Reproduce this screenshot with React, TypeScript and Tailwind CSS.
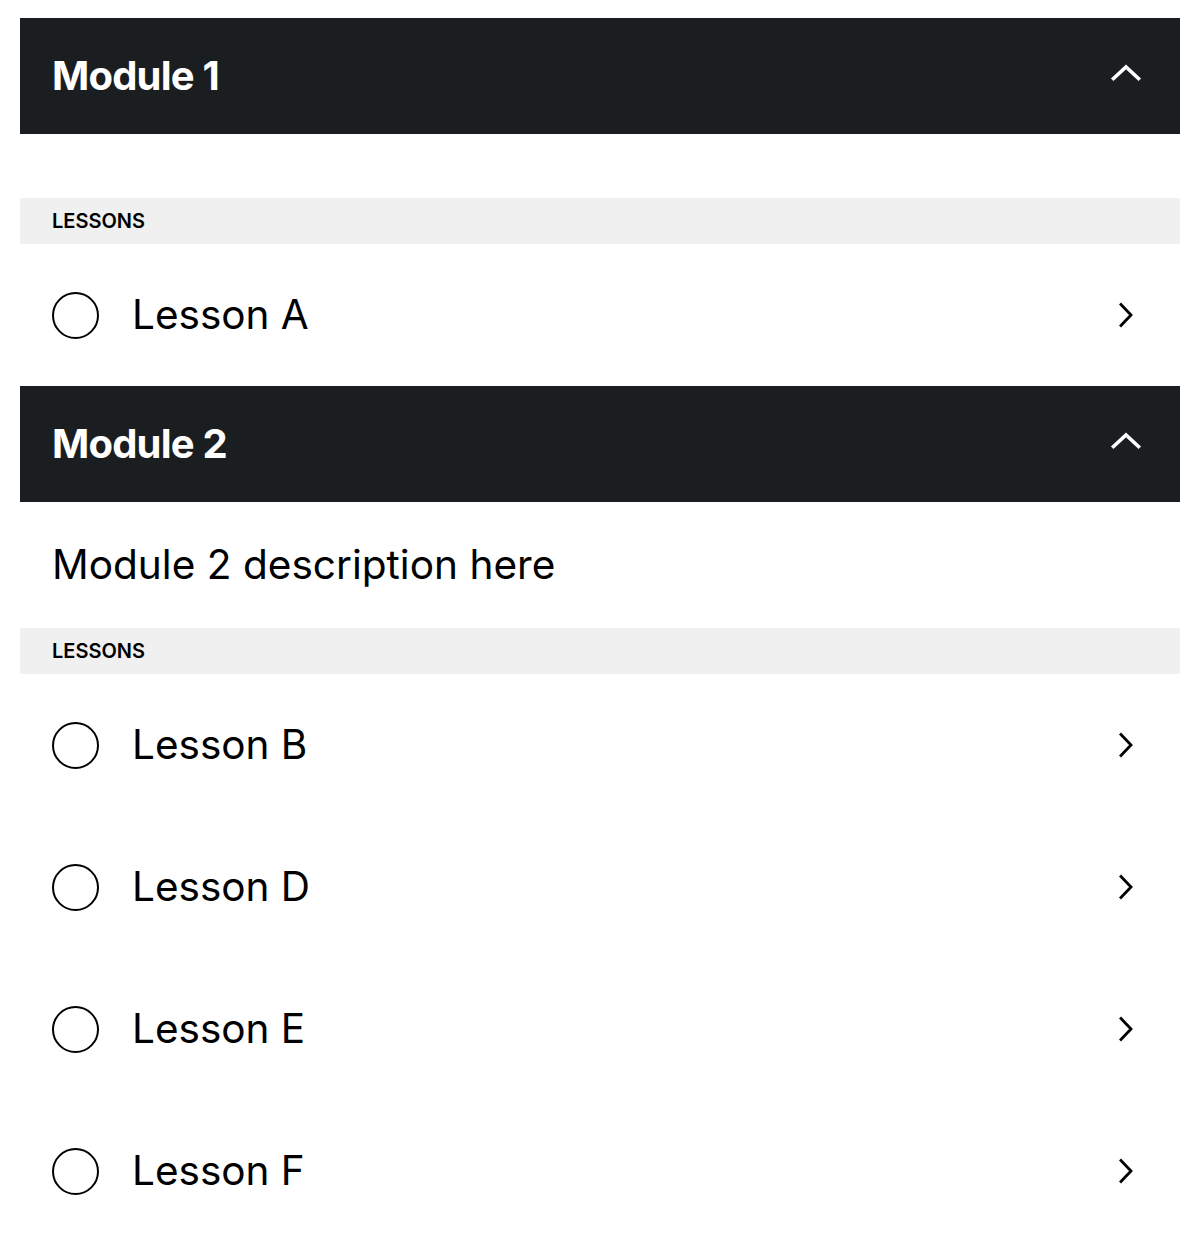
import React from 'react';

interface Module {
  id: number;
  title: string;
  description?: string;
  lessons: string[];
}

const modules: Module[] = [
  { id: 1, title: 'Module 1', lessons: ['Lesson A'] },
  { id: 2, title: 'Module 2', description: 'Module 2 description here', lessons: ['Lesson B', 'Lesson D', 'Lesson E', 'Lesson F'] },
];

const ChevronUp = () => (
  <svg className="mb-[6px]" width="32" height="18" viewBox="0 0 32 18" fill="none" stroke="currentColor" strokeWidth="3.6" strokeLinecap="square">
    <path d="M3.5 14.5 16 3 28.5 14.5" />
  </svg>
);

const ChevronRight = () => (
  <svg width="16" height="26" viewBox="0 0 16 26" fill="none" stroke="currentColor" strokeWidth="2.8" strokeLinecap="square">
    <path d="M3 2.5l10 10.5-10 10.5" />
  </svg>
);

const LessonRow = ({ name }: { name: string }) => (
  <div className="h-[142px] pl-8 pr-8 flex items-center">
    <div className="w-[47px] h-[47px] rounded-full border-2 border-black shrink-0" />
    <span className="ml-[33px] text-[40.5px] leading-none text-black flex-1">{name}</span>
    <div className="w-11 flex justify-center text-black">
      <ChevronRight />
    </div>
  </div>
);

const ModuleSection = ({ module }: { module: Module }) => (
  <section>
    {/* Header */}
    <div className="h-[116px] bg-[#1b1e21] px-8 flex items-center justify-between text-white">
      <h2 className="text-[40px] font-bold tracking-[-0.02em] leading-none">{module.title}</h2>
      <div className="w-11 flex justify-center">
        <ChevronUp />
      </div>
    </div>

    {/* Description */}
    <div className={`px-8 flex items-center ${module.description ? 'h-[126px]' : 'h-[64px]'}`}>
      {module.description && <p className="text-[40.6px] leading-none text-black">{module.description}</p>}
    </div>

    {/* Lessons */}
    <div className="h-[46px] bg-[#f0f0f0] px-8 flex items-center">
      <span className="text-[20px] font-semibold tracking-normal text-black">LESSONS</span>
    </div>
    {module.lessons.map((l) => (
      <LessonRow key={l} name={l} />
    ))}
  </section>
);

export default function App() {
  return (
    <div className="min-h-[1248px] bg-white pt-[18px] pl-5 pr-[18px] font-['Inter',sans-serif]">
      {modules.map((m) => (
        <ModuleSection key={m.id} module={m} />
      ))}
    </div>
  );
}
